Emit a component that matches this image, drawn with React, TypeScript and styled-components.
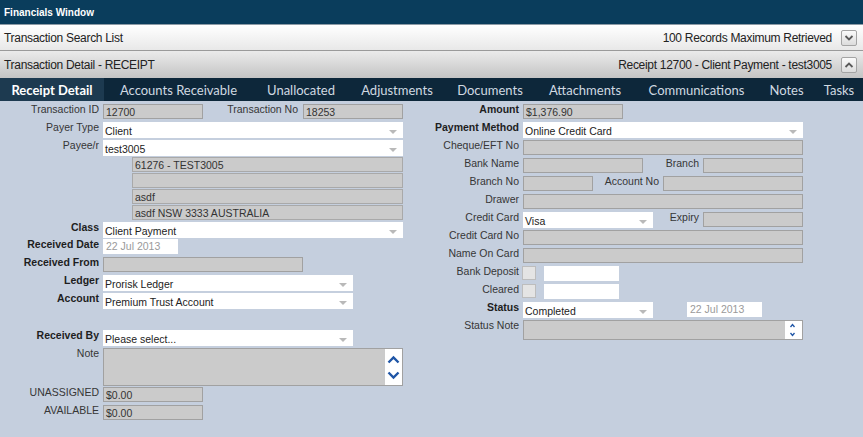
import React from 'react';
import styled, { createGlobalStyle } from 'styled-components';

const GlobalStyle = createGlobalStyle`
  html, body { margin: 0; padding: 0; }
  body { font-family: "Liberation Sans", Arial, sans-serif; background: #c5cfde; }
`;

const Window = styled.div`
  width: 863px;
  height: 437px;
  display: flex;
  flex-direction: column;
  overflow: hidden;
  background: #c5cfde;
`;

const TitleBar = styled.div`
  height: 24px;
  background: #0a3d5c;
  border-bottom: 1px solid #8d9ba6;
  color: #ffffff;
  font: bold 10px "Liberation Sans", Arial, sans-serif;
  display: flex;
  align-items: center;
  padding-left: 4px;
`;

const SectionBar = styled.div<{ $tone: 'light' | 'dark' }>`
  height: ${p => (p.$tone === 'light' ? 25 : 27)}px;
  background: ${p =>
    p.$tone === 'light'
      ? 'linear-gradient(#ffffff, #e8e8e8)'
      : 'linear-gradient(#ebebeb, #c4c4c4)'};
  border-bottom: ${p => (p.$tone === 'light' ? '1px solid #9a9a9a' : 'none')};
  display: flex;
  align-items: center;
  padding: 0 6px 0 4px;
  font-size: 12px;
  letter-spacing: -0.3px;
  color: #222;
`;

const BarInfo = styled.span`
  margin-left: auto;
  margin-right: 9px;
`;

const CollapseButton = styled.div`
  width: 16px;
  height: 16px;
  box-sizing: border-box;
  border: 1px solid #a4a4a4;
  border-radius: 2px;
  background: linear-gradient(#fbfbfb, #dcdcdc);
  display: flex;
  align-items: center;
  justify-content: center;
`;

const TabBar = styled.div`
  height: 23px;
  background: #0d273a;
  display: flex;
`;

const Tab = styled.div<{ $active?: boolean; $w: number }>`
  width: ${p => p.$w}px;
  flex: none;
  display: flex;
  align-items: center;
  justify-content: center;
  background: ${p => (p.$active ? '#1d3a50' : 'transparent')};
  color: ${p => (p.$active ? '#ffffff' : '#d0d9e1')};
  font: ${p => (p.$active ? 'bold' : 'normal')} 13px Lato, "Liberation Sans", sans-serif;
  white-space: nowrap;
`;

const Form = styled.div`
  flex: 1;
  display: grid;
  grid-template-columns: 420px 443px;
  padding-top: 3px;
`;

const Column = styled.div`
  display: flex;
  flex-direction: column;
`;

const Row = styled.div<{ $h?: number }>`
  display: flex;
  align-items: flex-start;
  height: ${p => p.$h ?? 18}px;
`;

const Label = styled.div<{ $bold?: boolean }>`
  width: 103px;
  flex: none;
  box-sizing: border-box;
  padding-right: 4px;
  text-align: right;
  font-size: 10.5px;
  line-height: 11px;
  font-weight: ${p => (p.$bold ? 700 : 400)};
  color: ${p => (p.$bold ? '#1e1e1e' : '#363636')};
  white-space: nowrap;
`;

const Controls = styled.div<{ $w: number }>`
  width: ${p => p.$w}px;
  display: flex;
  align-items: flex-start;
`;

const InlineLabel = styled.div<{ $pad?: number }>`
  flex: 1;
  text-align: right;
  padding-right: ${p => p.$pad ?? 4}px;
  font-size: 10.5px;
  line-height: 11px;
  color: #363636;
  white-space: nowrap;
`;

const GrayField = styled.div<{ $w: number }>`
  width: ${p => p.$w}px;
  height: 15px;
  flex: none;
  box-sizing: border-box;
  background: #cbcbcb;
  border: 1px solid #a1a1a1;
  padding-left: 2px;
  font-size: 10.5px;
  line-height: 14px;
  color: #333;
  white-space: nowrap;
  overflow: hidden;
`;

const SelectField = styled.div<{ $w: number }>`
  width: ${p => p.$w}px;
  height: 16px;
  flex: none;
  box-sizing: border-box;
  background: #ffffff;
  display: flex;
  align-items: center;
  padding: 1px 6px 0 2px;
  font-size: 10.5px;
  color: #222;
  white-space: nowrap;
`;

const Arrow = styled.span`
  margin-left: auto;
  margin-top: 3px;
  width: 0;
  height: 0;
  border-left: 4px solid transparent;
  border-right: 4px solid transparent;
  border-top: 4px solid #b9b9b9;
`;

const DateField = styled.div<{ $ml?: number }>`
  width: 75px;
  height: 15px;
  flex: none;
  box-sizing: border-box;
  margin-left: ${p => p.$ml ?? 0}px;
  background: #ffffff;
  padding-left: 3px;
  font-size: 10.5px;
  line-height: 15px;
  color: #9a9a9a;
  white-space: nowrap;
`;

const BlankField = styled.div`
  width: 75px;
  height: 15px;
  flex: none;
  margin-left: 8px;
  background: #ffffff;
`;

const Checkbox = styled.div`
  width: 14px;
  height: 14px;
  flex: none;
  box-sizing: border-box;
  margin-left: -1px;
  background: #e4e4e4;
  border: 1px solid #bdbdbd;
`;

const AddressStack = styled.div`
  margin-left: 29px;
  display: flex;
  flex-direction: column;
  gap: 1px;
`;

const AddressLine = styled(GrayField)`
  border-color: #a9a9a9;
`;

const TextBox = styled.div<{ $w: number; $h: number }>`
  width: ${p => p.$w}px;
  height: ${p => p.$h}px;
  flex: none;
  box-sizing: border-box;
  background: #cbcbcb;
  border: 1px solid #a1a1a1;
  display: flex;
  justify-content: flex-end;
`;

const ScrollStrip = styled.div`
  width: 17px;
  height: 100%;
  background: #ffffff;
  display: flex;
`;

const Chevron = ({ dir }: { dir: 'up' | 'down' }) => (
  <svg width="14" height="14" viewBox="0 0 14 14">
    <polyline
      points={dir === 'down' ? '3.5,5 7,8.5 10.5,5' : '3.5,9 7,5.5 10.5,9'}
      fill="none"
      stroke="#5a5a5a"
      strokeWidth="1.8"
    />
  </svg>
);

const BigSpin = () => (
  <svg width="17" height="36" viewBox="0 0 17 36">
    <polyline points="3.5,13.5 8.5,8.5 13.5,13.5" fill="none" stroke="#1f55a6" strokeWidth="2.4" />
    <polyline points="3.5,23.5 8.5,28.5 13.5,23.5" fill="none" stroke="#1f55a6" strokeWidth="2.4" />
  </svg>
);

const SmallSpin = () => (
  <svg width="17" height="18" viewBox="0 0 17 18">
    <polyline points="5.5,6 7.5,3.5 9.5,6" fill="none" stroke="#1f55a6" strokeWidth="1.3" />
    <polyline points="5.5,12 7.5,14.5 9.5,12" fill="none" stroke="#1f55a6" strokeWidth="1.3" />
  </svg>
);

const tabs = [
  { name: 'Receipt Detail', w: 104, active: true },
  { name: 'Accounts Receivable', w: 149 },
  { name: 'Unallocated', w: 96 },
  { name: 'Adjustments', w: 96 },
  { name: 'Documents', w: 90 },
  { name: 'Attachments', w: 100 },
  { name: 'Communications', w: 123 },
  { name: 'Notes', w: 57 },
  { name: 'Tasks', w: 48 },
];

const Select = ({ w, value }: { w: number; value: string }) => (
  <SelectField $w={w}>
    <span>{value}</span>
    <Arrow />
  </SelectField>
);

export default function App() {
  return (
    <Window>
      <GlobalStyle />
      <TitleBar>Financials Window</TitleBar>
      <SectionBar $tone="light">
        <span>Transaction Search List</span>
        <BarInfo>100 Records Maximum Retrieved</BarInfo>
        <CollapseButton>
          <Chevron dir="down" />
        </CollapseButton>
      </SectionBar>
      <SectionBar $tone="dark">
        <span>Transaction Detail - RECEIPT</span>
        <BarInfo>Receipt 12700 - Client Payment - test3005</BarInfo>
        <CollapseButton>
          <Chevron dir="up" />
        </CollapseButton>
      </SectionBar>
      <TabBar>
        {tabs.map(t => (
          <Tab key={t.name} $w={t.w} $active={t.active}>
            {t.name}
          </Tab>
        ))}
      </TabBar>
      <Form>
        <Column>
          <Row>
            <Label>Transaction ID</Label>
            <Controls $w={300}>
              <GrayField $w={100}>12700</GrayField>
              <InlineLabel $pad={5}>Transaction No</InlineLabel>
              <GrayField $w={100}>18253</GrayField>
            </Controls>
          </Row>
          <Row>
            <Label>Payer Type</Label>
            <Select w={300} value="Client" />
          </Row>
          <Row $h={17}>
            <Label>Payee/r</Label>
            <Select w={300} value="test3005" />
          </Row>
          <Row $h={65}>
            <Label />
            <AddressStack>
              <AddressLine $w={271}>61276 - TEST3005</AddressLine>
              <AddressLine $w={271} />
              <AddressLine $w={271}>asdf</AddressLine>
              <AddressLine $w={271}>asdf NSW 3333 AUSTRALIA</AddressLine>
            </AddressStack>
          </Row>
          <Row $h={17}>
            <Label $bold>Class</Label>
            <Select w={300} value="Client Payment" />
          </Row>
          <Row>
            <Label $bold>Received Date</Label>
            <DateField>22 Jul 2013</DateField>
          </Row>
          <Row>
            <Label $bold>Received From</Label>
            <GrayField $w={200} />
          </Row>
          <Row>
            <Label $bold>Ledger</Label>
            <Select w={250} value="Prorisk Ledger" />
          </Row>
          <Row $h={37}>
            <Label $bold>Account</Label>
            <Select w={250} value="Premium Trust Account" />
          </Row>
          <Row>
            <Label $bold>Received By</Label>
            <Select w={250} value="Please select..." />
          </Row>
          <Row $h={39}>
            <Label>Note</Label>
            <TextBox $w={300} $h={38}>
              <ScrollStrip>
                <BigSpin />
              </ScrollStrip>
            </TextBox>
          </Row>
          <Row>
            <Label>UNASSIGNED</Label>
            <GrayField $w={100}>$0.00</GrayField>
          </Row>
          <Row>
            <Label>AVAILABLE</Label>
            <GrayField $w={100}>$0.00</GrayField>
          </Row>
        </Column>
        <Column>
          <Row>
            <Label $bold>Amount</Label>
            <GrayField $w={100}>$1,376.90</GrayField>
          </Row>
          <Row>
            <Label $bold>Payment Method</Label>
            <Select w={280} value="Online Credit Card" />
          </Row>
          <Row>
            <Label>Cheque/EFT No</Label>
            <GrayField $w={280} />
          </Row>
          <Row>
            <Label>Bank Name</Label>
            <Controls $w={280}>
              <GrayField $w={120} />
              <InlineLabel>Branch</InlineLabel>
              <GrayField $w={100} />
            </Controls>
          </Row>
          <Row>
            <Label>Branch No</Label>
            <Controls $w={280}>
              <GrayField $w={70} />
              <InlineLabel>Account No</InlineLabel>
              <GrayField $w={140} />
            </Controls>
          </Row>
          <Row>
            <Label>Drawer</Label>
            <GrayField $w={280} />
          </Row>
          <Row>
            <Label>Credit Card</Label>
            <Controls $w={280}>
              <Select w={130} value="Visa" />
              <InlineLabel>Expiry</InlineLabel>
              <GrayField $w={100} />
            </Controls>
          </Row>
          <Row>
            <Label>Credit Card No</Label>
            <GrayField $w={280} />
          </Row>
          <Row>
            <Label>Name On Card</Label>
            <GrayField $w={280} />
          </Row>
          <Row>
            <Label>Bank Deposit</Label>
            <Checkbox />
            <BlankField />
          </Row>
          <Row>
            <Label>Cleared</Label>
            <Checkbox />
            <BlankField />
          </Row>
          <Row>
            <Label $bold>Status</Label>
            <Select w={130} value="Completed" />
            <DateField $ml={34}>22 Jul 2013</DateField>
          </Row>
          <Row $h={20}>
            <Label>Status Note</Label>
            <TextBox $w={280} $h={20}>
              <ScrollStrip>
                <SmallSpin />
              </ScrollStrip>
            </TextBox>
          </Row>
        </Column>
      </Form>
    </Window>
  );
}
